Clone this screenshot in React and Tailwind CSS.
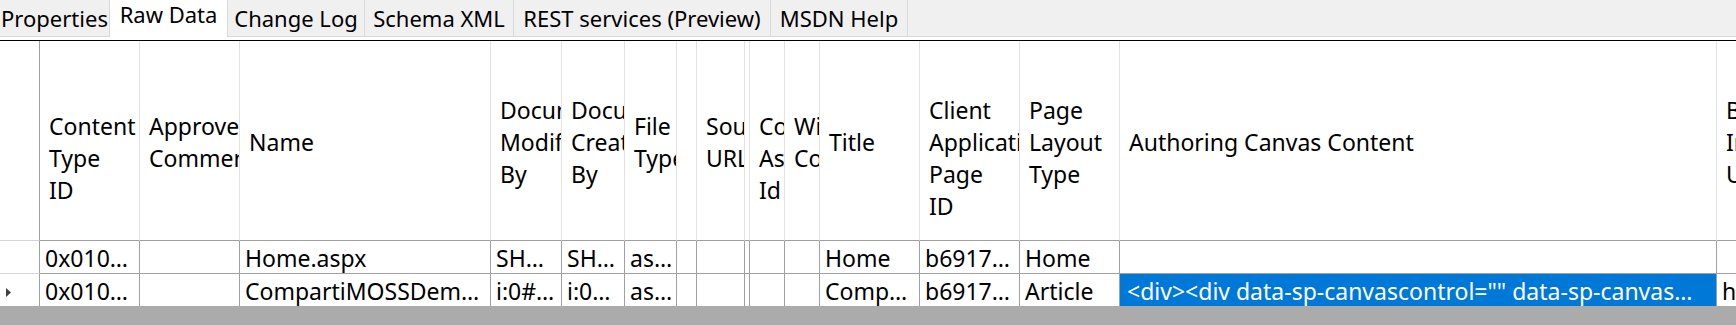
import React from 'react';

const tabs = [
  { label: 'Properties', w: 'w-[110px]' },
  { label: 'Raw Data', w: 'w-[118px]', active: true },
  { label: 'Change Log', w: 'w-[137px]' },
  { label: 'Schema XML', w: 'w-[149px]' },
  { label: 'REST services (Preview)', w: 'w-[257px]' },
  { label: 'MSDN Help', w: 'w-[137px]' },
];

// header lines are given explicitly; "shift" adds an empty first line like the original grid does
const columns = [
  { w: 'w-[100px]', head: ['Content', 'Type', 'ID'], shift: true },
  { w: 'w-[100px]', head: ['Approver', 'Comments'] },
  { w: 'w-[251px]', head: ['Name'] },
  { w: 'w-[71px]', head: ['Document', 'Modified', 'By'] },
  { w: 'w-[63px]', head: ['Document', 'Created', 'By'] },
  { w: 'w-[52px]', head: ['File', 'Type'] },
  { w: 'w-[20px]', head: [] },
  { w: 'w-[48px]', head: ['Source', 'URL'] },
  { w: 'w-[5px]', head: [] },
  { w: 'w-[35px]', head: ['Compliance', 'Asset', 'Id'], shift: true },
  { w: 'w-[35px]', head: ['Wiki', 'Content'] },
  { w: 'w-[100px]', head: ['Title'] },
  { w: 'w-[100px]', head: ['Client', 'Application', 'Page', 'ID'], shift: true },
  { w: 'w-[100px]', head: ['Page', 'Layout', 'Type'] },
  { w: 'w-[597px]', head: ['Authoring Canvas Content'] },
  { w: 'w-[300px]', head: ['Banner', 'Image', 'URL'] },
];

const rows = [
  {
    current: false,
    cells: ['0x010…', '', 'Home.aspx', 'SH…', 'SH…', 'as…', '', '', '', '', '', 'Home', 'b6917…', 'Home', '', ''],
  },
  {
    current: true,
    selected: 14,
    cells: [
      '0x010…', '', 'CompartiMOSSDem…', 'i:0#…', 'i:0…', 'as…', '', '', '', '', '', 'Comp…', 'b6917…', 'Article',
      '<div><div data-sp-canvascontrol="" data-sp-canvas…',
      'https://compartimoss.sharepoint.com',
    ],
  },
];

function Tabs() {
  return (
    <div className="flex h-[37px] bg-[#f0f0f0] border-b border-[#d9d9d9] text-[22px] leading-[28px]">
      {tabs.map((t) =>
        t.active ? (
          <div
            key={t.label}
            className={`${t.w} relative h-[37px] shrink-0 bg-white border-r border-[#d9d9d9] text-center whitespace-nowrap`}
          >
            {t.label}
          </div>
        ) : (
          <div
            key={t.label}
            className={`${t.w} h-[36px] shrink-0 border-r border-[#d9d9d9] pt-[4px] text-center whitespace-nowrap`}
          >
            {t.label}
          </div>
        )
      )}
    </div>
  );
}

function HeaderRow() {
  return (
    <div className="flex">
      <div className="w-[40px] h-[200px] shrink-0 border-r border-r-[#a0a0a0] border-b border-b-[#d6d6d6]" />
      {columns.map((c, i) =>
        c.head.length ? (
          <div
            key={i}
            className={`${c.w} h-[200px] shrink-0 border-r border-r-[#e2e2e2] border-b border-b-[#a0a0a0] flex flex-col justify-center pl-[9px] pr-[3px] pt-[3px] overflow-hidden text-[23px] leading-[32px]`}
          >
            {c.shift && <div className="h-[32px]" />}
            {c.head.map((line) => (
              <div key={line} className="whitespace-nowrap">
                {line}
              </div>
            ))}
          </div>
        ) : (
          <div
            key={i}
            className={`${c.w} h-[200px] shrink-0 border-r border-r-[#e2e2e2] border-b border-b-[#a0a0a0]`}
          />
        )
      )}
    </div>
  );
}

function DataRow({ row }) {
  return (
    <div className="flex">
      <div className="w-[40px] h-[33px] shrink-0 border-r border-r-[#a0a0a0] border-b border-b-[#d6d6d6] flex items-center pl-[6px] pt-[4px]">
        {row.current && (
          <svg width="6" height="9" viewBox="0 0 6 9">
            <polygon points="0,0 5,4.5 0,9" fill="#404040" />
          </svg>
        )}
      </div>
      {row.cells.map((text, i) =>
        row.selected === i ? (
          <div
            key={i}
            className={`${columns[i].w} h-[33px] shrink-0 border-r border-b border-[#a0a0a0] bg-[#0078d7] text-white pl-[7px] overflow-hidden whitespace-nowrap text-[23px] leading-[34px]`}
          >
            {text}
          </div>
        ) : text ? (
          <div
            key={i}
            className={`${columns[i].w} h-[33px] shrink-0 border-r border-b border-[#a0a0a0] pl-[5px] overflow-hidden whitespace-nowrap text-[23px] leading-[34px]`}
          >
            {text}
          </div>
        ) : (
          <div key={i} className={`${columns[i].w} h-[33px] shrink-0 border-r border-b border-[#a0a0a0]`} />
        )
      )}
    </div>
  );
}

export default function App() {
  return (
    <div className="w-[1736px] h-[325px] overflow-hidden bg-white text-black font-['Noto_Sans',sans-serif] flex flex-col">
      <Tabs />
      <div className="h-[3px] shrink-0 bg-white" />
      <div className="h-px shrink-0 bg-black" />
      <div className="relative flex-1 overflow-hidden">
        <div className="w-max">
          <HeaderRow />
          {rows.map((r, i) => (
            <DataRow key={i} row={r} />
          ))}
        </div>
        <div className="absolute left-0 right-0 top-[265px] bottom-0 bg-[#ababab]" />
      </div>
    </div>
  );
}
